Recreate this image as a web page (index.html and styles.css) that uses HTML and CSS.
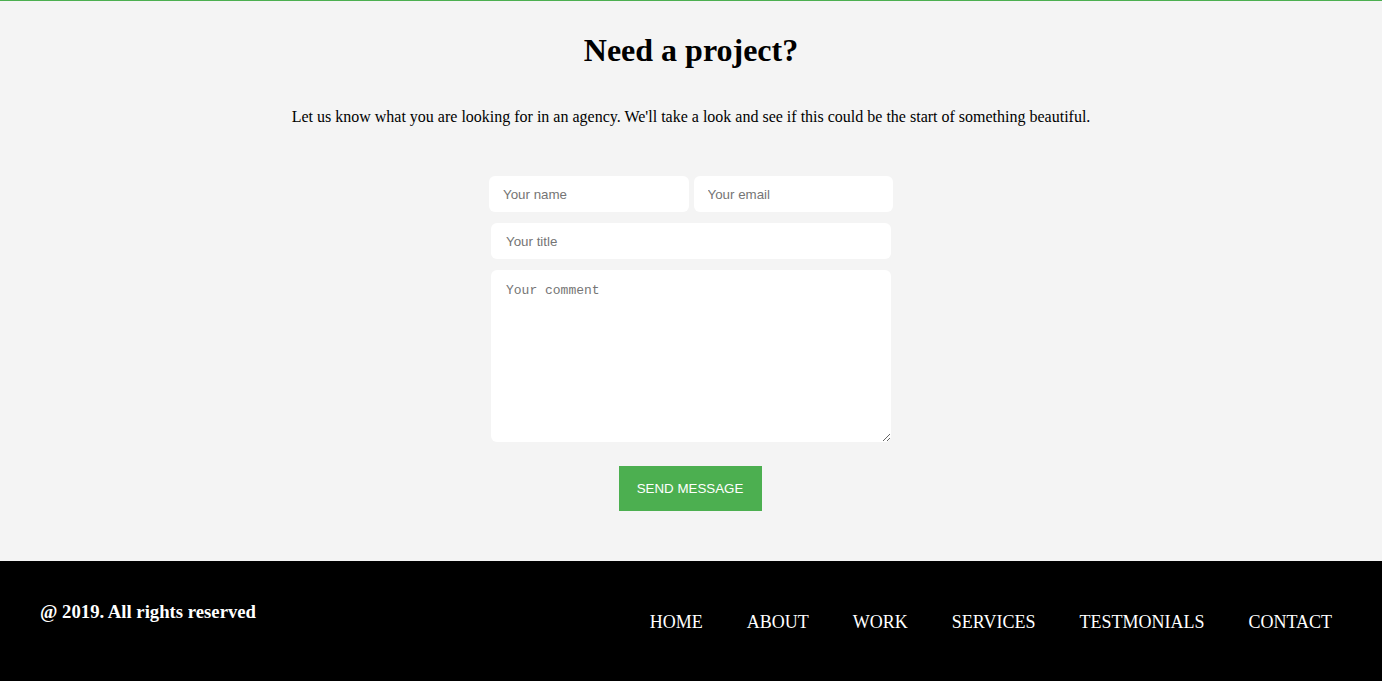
FILE: index.html
```html
<!DOCTYPE html>
<html>
<head>
<meta charset="utf-8">
<title>Contact</title>
<link rel="stylesheet" href="styles.css">
</head>
<body>
<section class="contact">
  <h1 class="contact-title">Need a project?</h1>
  <p class="contact-lead">Let us know what you are looking for in an agency. We'll take a look and see if this could be the start of something beautiful.</p>
  <form class="contact-form">
    <div class="form-row">
      <input class="field" type="text" placeholder="Your name">
      <input class="field" type="email" placeholder="Your email">
    </div>
    <input class="field field-wide" type="text" placeholder="Your title">
    <textarea class="field field-area" placeholder="Your comment"></textarea>
    <button class="send-btn" type="button">SEND MESSAGE</button>
  </form>
</section>
<footer class="footer">
  <h3 class="copyright">@ 2019. All rights reserved</h3>
  <nav class="footer-nav">
    <a href="#">HOME</a>
    <a href="#">ABOUT</a>
    <a href="#">WORK</a>
    <a href="#">SERVICES</a>
    <a href="#">TESTMONIALS</a>
    <a href="#">CONTACT</a>
  </nav>
</footer>
</body>
</html>
```

FILE: styles.css
```css
html, body {
  margin: 0;
  padding: 0;
}
body {
  font-family: "Liberation Serif", "Times New Roman", serif;
  background: #f4f4f4;
  color: #000;
}
.contact {
  border-top: 1px solid #4caf50;
  background: #f4f4f4;
  height: 560px;
  box-sizing: content-box;
  display: flex;
  flex-direction: column;
  align-items: center;
}
.contact-title {
  font-size: 32px;
  font-weight: bold;
  margin: 31px 0 0;
  line-height: 37px;
}
.contact-lead {
  font-size: 16px;
  line-height: 18px;
  margin: 39px 0 0;
}
.contact-form {
  margin-top: 50px;
  width: 404px;
  display: flex;
  flex-direction: column;
  align-items: center;
}
.form-row {
  display: flex;
  gap: 5px;
  width: 404px;
}
.field {
  border: none;
  outline: none;
  background: #fff;
  border-radius: 6px;
  height: 36px;
  box-sizing: border-box;
  font-family: "Liberation Sans", Arial, sans-serif;
  font-size: 13.33px;
  color: #333;
  padding: 1px 14px 0;
}
.form-row .field {
  width: 199.5px;
}
.field::placeholder {
  color: #757575;
}
.field-wide {
  width: 400px;
  margin-top: 11px;
  padding: 1px 15px 0;
}
.field-area {
  width: 400px;
  height: 172px;
  margin-top: 11px;
  padding: 13px 15px 12px;
  font-family: "Liberation Mono", "Courier New", monospace;
  font-size: 13px;
  resize: both;
}
.send-btn {
  margin-top: 24px;
  margin-right: 2px;
  width: 143px;
  height: 45px;
  border: none;
  background: #4caf50;
  color: #fff;
  font-family: "Liberation Sans", Arial, sans-serif;
  font-size: 13.33px;
  cursor: pointer;
}
.footer {
  background: #000;
  color: #fff;
  height: 120px;
  display: flex;
  justify-content: space-between;
  align-items: flex-start;
  padding: 0 50px 0 40px;
}
.copyright {
  margin: 40px 0 0;
  font-size: 18.72px;
  line-height: 22px;
}
.footer-nav {
  display: flex;
  gap: 44px;
  margin-top: 51px;
}
.footer-nav a {
  color: #fff;
  text-decoration: none;
  font-size: 18px;
  line-height: 20px;
}
```
